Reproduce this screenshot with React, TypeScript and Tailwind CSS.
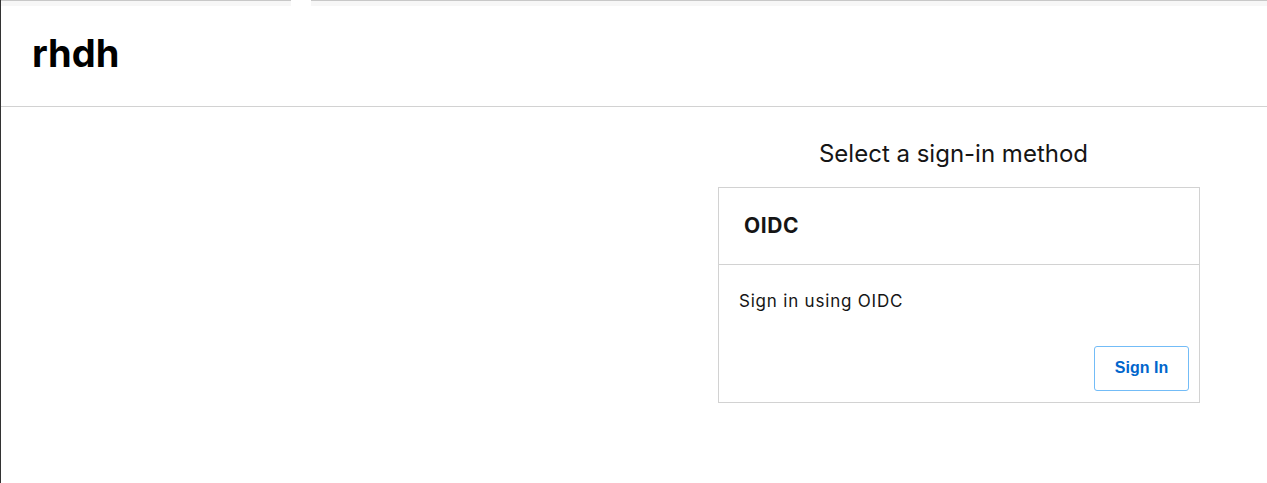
import React from "react";

const font = { fontFamily: 'Inter, "Open Sans", Arial, sans-serif' };

const SignInCard = () => (
  <div className="w-[482px] border border-[#d2d2d2] bg-white">
    <div className="flex h-[77px] items-center border-b border-[#d2d2d2] px-[25px]">
      <h2 className="text-[21px] font-bold tracking-[0.6px] text-[#151515]" style={font}>
        OIDC
      </h2>
    </div>
    <div className="pl-[20px] pr-[10px] pt-[24px] pb-[11px]">
      <p className="text-[17px] tracking-[0.8px] text-[#151515]" style={font}>
        Sign in using OIDC
      </p>
      <div className="mt-[31px] flex justify-end">
        <button
          className="h-[45px] w-[95px] rounded-[3px] border border-[#73bcf7] bg-white text-[16px] font-bold text-[#0066cc]"
          style={{ fontFamily: '"Liberation Sans", Arial, sans-serif' }}
        >
          Sign In
        </button>
      </div>
    </div>
  </div>
);

const App = () => {
  return (
    <div className="min-h-[483px] border-l border-[#333] bg-white">
      <div className="flex h-[6px]">
        <div className="w-[290px] border-t border-[#c8c8c8] bg-[#f7f7f7]" />
        <div className="w-[20px] bg-white" />
        <div className="flex-1 border-t border-[#c8c8c8] bg-[#f7f7f7]" />
      </div>
      <header className="flex h-[101px] items-center border-b border-[#d2d2d2] px-[31px] pb-[6px]">
        <h1 className="text-[38px] font-bold text-black" style={font}>
          rhdh
        </h1>
      </header>
      <main className="flex justify-end pr-[67px]">
        <div className="flex flex-col items-center">
          <h3 className="mt-[29px] mb-[15px] pr-[11px] text-[24px] text-[#151515]" style={font}>
            Select a sign-in method
          </h3>
          <SignInCard />
        </div>
      </main>
    </div>
  );
};

export default App;
